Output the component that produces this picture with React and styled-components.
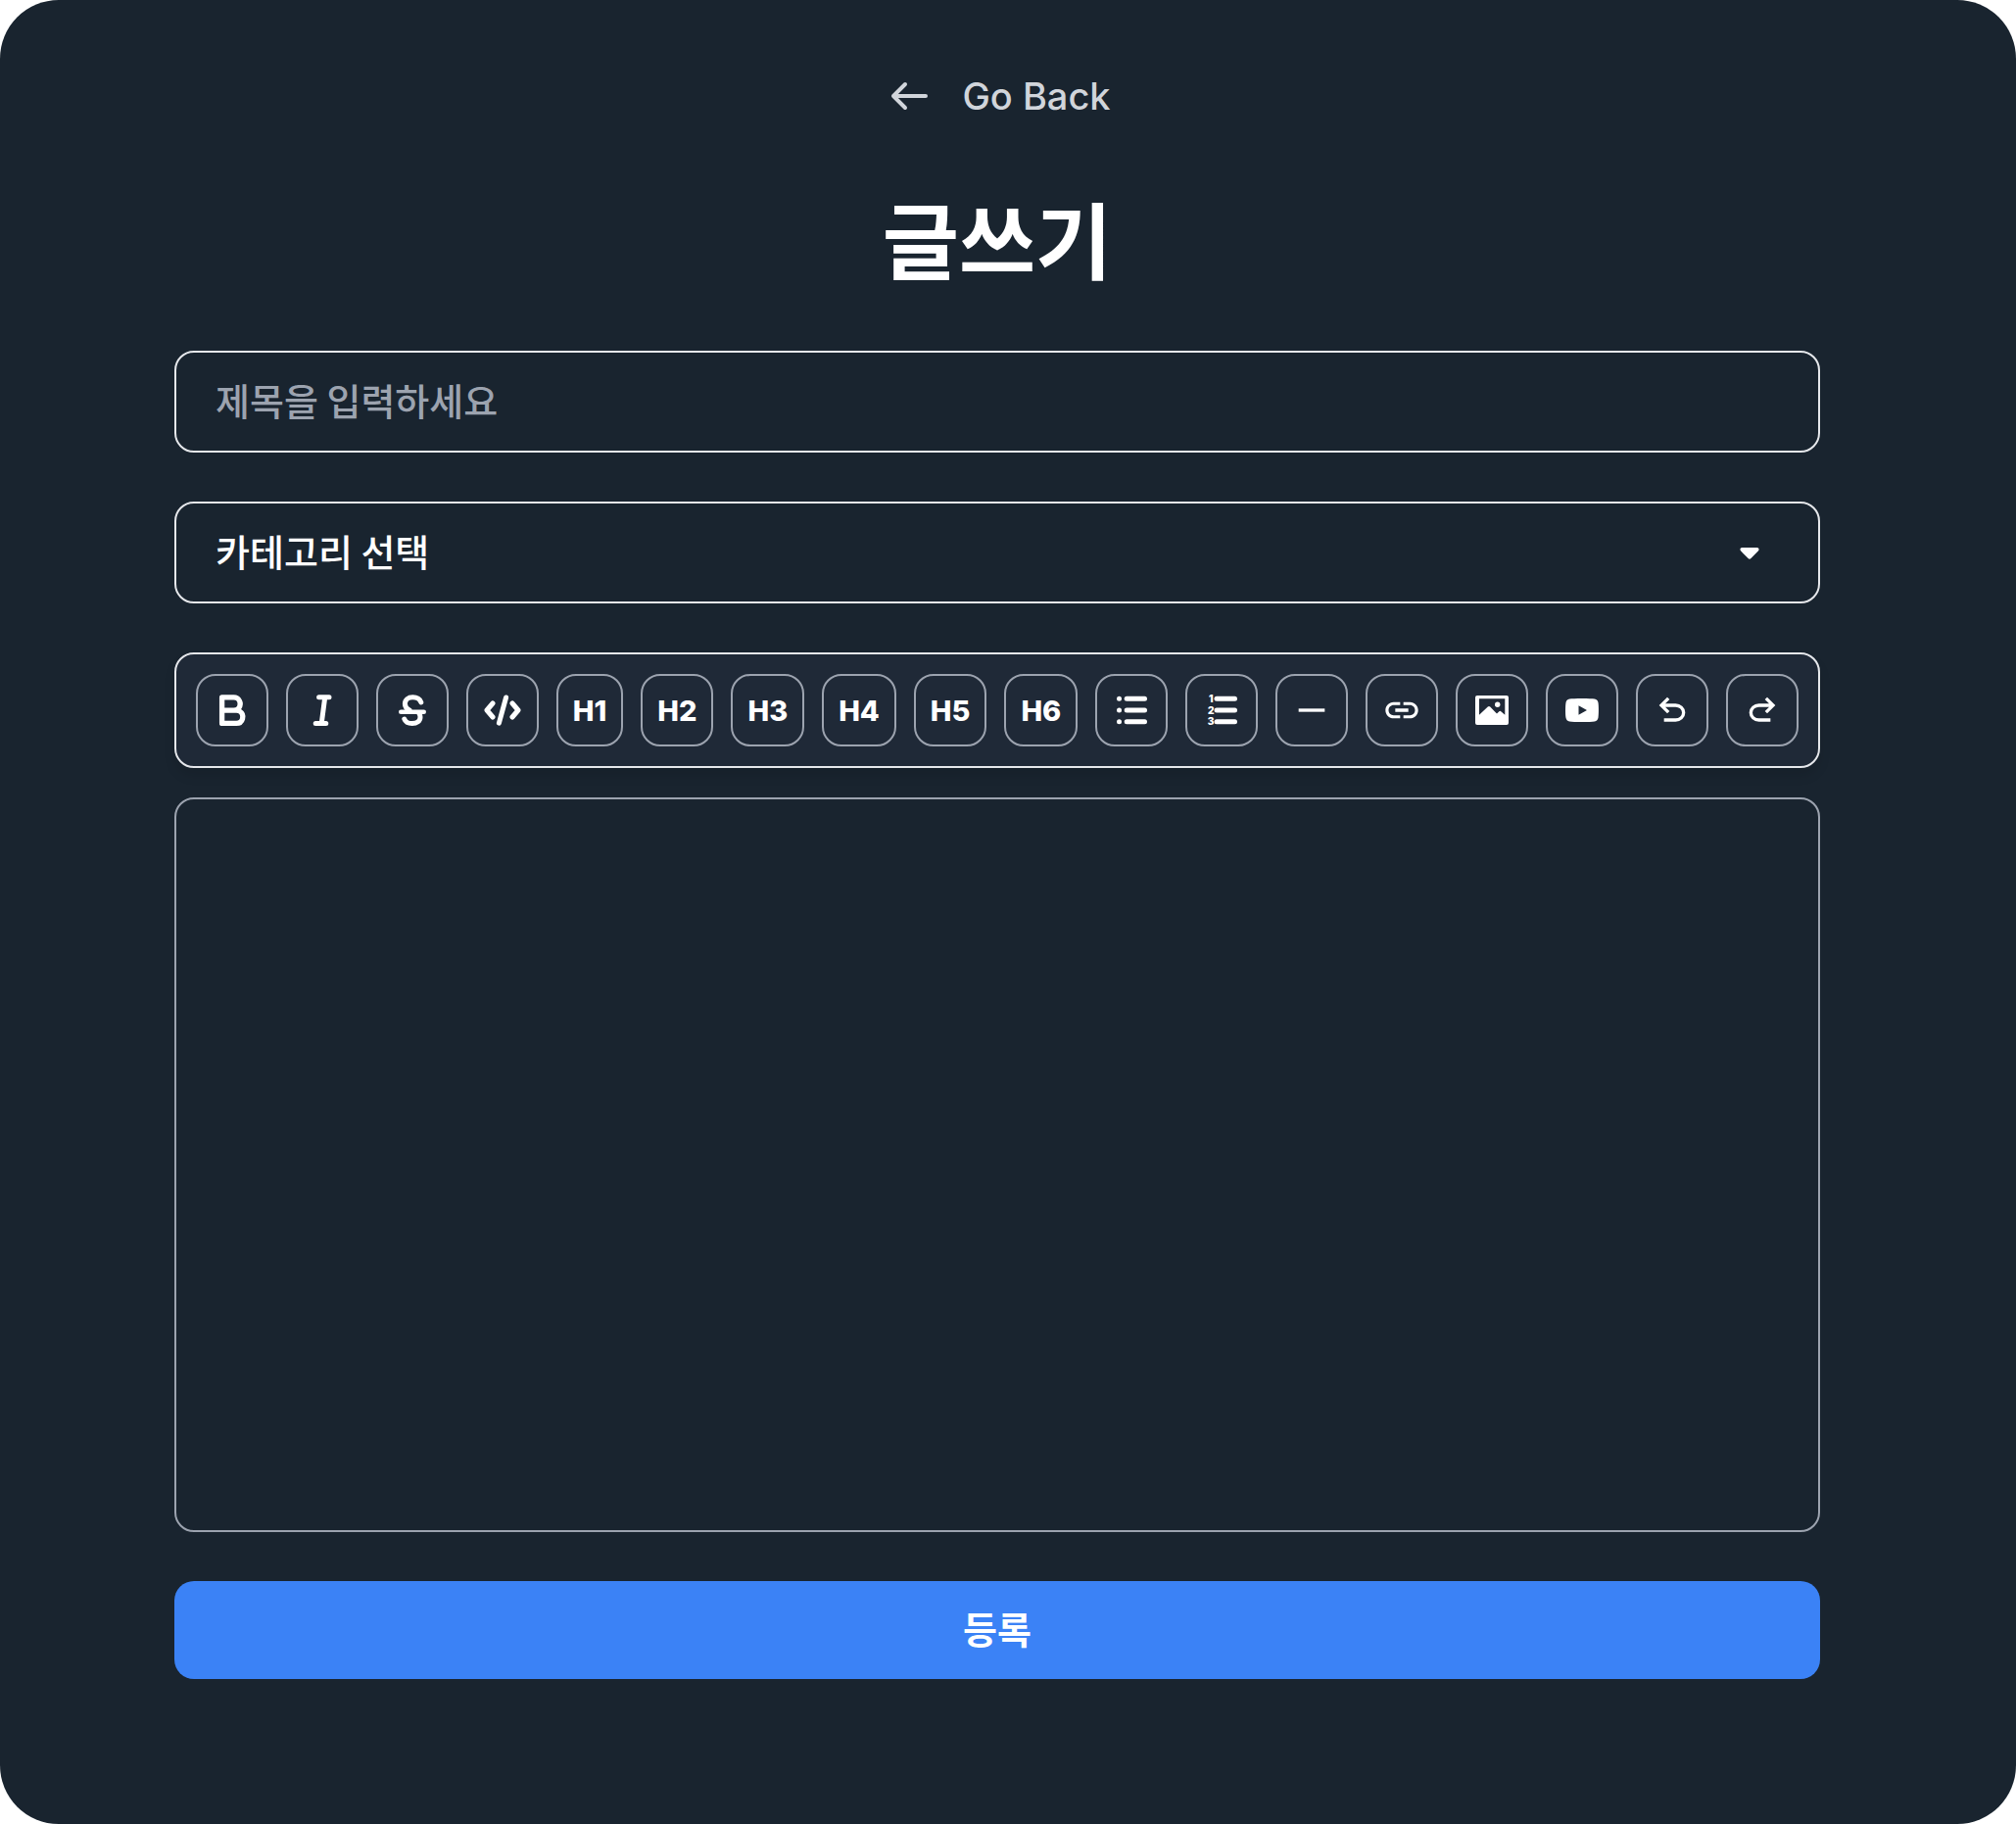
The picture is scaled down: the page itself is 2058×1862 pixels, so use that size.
import React from "react";
import styled, { createGlobalStyle } from "styled-components";
import { MdHorizontalRule, MdLink } from "react-icons/md";

const colors = {
  page: "#19242f",
  toolbar: "#1f2937",
  line: "#e5e7eb",
  lineMuted: "#9ca3af",
  back: "#d1d5db",
  primary: "#3b82f6",
};

const GlobalStyle = createGlobalStyle`
  * {
    box-sizing: border-box;
  }
  body {
    margin: 0;
    background: #ffffff;
    font-family: "Noto Sans CJK KR", sans-serif;
  }
  button, input, select, textarea {
    font-family: inherit;
  }
`;

const Page = styled.main`
  min-height: 100vh;
  padding: 68px 200px 148px 178px;
  background: ${colors.page};
  border-radius: 60px;
  color: #ffffff;
`;

const BackLink = styled.a`
  display: flex;
  align-items: center;
  justify-content: center;
  gap: 32px;
  height: 60px;
  color: ${colors.back};
  font-family: Inter, sans-serif;
  font-size: 38px;
  font-weight: 500;
  line-height: 60px;
  text-decoration: none;
`;

const Title = styled.h1`
  margin: 54px 0 56px;
  font-size: 85px;
  font-weight: 700;
  line-height: 120px;
  text-align: center;
`;

const Form = styled.form`
  display: flex;
  flex-direction: column;
  gap: 50px;
`;

const TitleInput = styled.input`
  width: 100%;
  height: 104px;
  padding: 0 40px 6px;
  border: 2px solid ${colors.line};
  border-radius: 20px;
  background: transparent;
  color: #ffffff;
  font-size: 38px;
  font-weight: 500;

  &::placeholder {
    color: ${colors.lineMuted};
    opacity: 1;
  }
`;

const SelectWrap = styled.div`
  position: relative;
`;

const Select = styled.select`
  display: block;
  width: 100%;
  height: 104px;
  padding: 0 100px 6px 40px;
  border: 2px solid ${colors.line};
  border-radius: 20px;
  appearance: none;
  background: transparent;
  color: #ffffff;
  font-size: 38px;
  font-weight: 500;
`;

const Caret = styled.svg`
  position: absolute;
  top: 46px;
  right: 61px;
  pointer-events: none;
`;

const Editor = styled.div`
  display: flex;
  flex-direction: column;
  gap: 30px;
`;

const Toolbar = styled.div`
  display: flex;
  justify-content: space-between;
  padding: 20px;
  border: 2px solid ${colors.line};
  border-radius: 20px;
  background: ${colors.toolbar};
  box-shadow: 0 8px 12px rgba(0, 0, 0, 0.1);
`;

const ToolButton = styled.button`
  display: flex;
  align-items: center;
  justify-content: center;
  height: 74px;
  padding: 0 15px;
  border: 2px solid ${colors.lineMuted};
  border-radius: 20px;
  background: transparent;
  color: #ffffff;
  font-family: Inter, sans-serif;
  font-size: 29px;
  font-weight: 800;
  cursor: pointer;
`;

const Content = styled.textarea`
  display: block;
  width: 100%;
  height: 750px;
  padding: 40px;
  border: 2px solid ${colors.lineMuted};
  border-radius: 20px;
  background: transparent;
  color: #ffffff;
  font-size: 38px;
  resize: none;
`;

const SubmitButton = styled.button`
  height: 100px;
  padding: 0 0 6px;
  border: 0;
  border-radius: 20px;
  background: ${colors.primary};
  color: #ffffff;
  font-size: 38px;
  font-weight: 700;
  cursor: pointer;
`;

const Icon = ({ children }) => (
  <svg width="40" height="40" viewBox="0 0 40 40" fill="currentColor" aria-hidden="true">
    {children}
  </svg>
);

const StrokeIcon = ({ children }) => (
  <Icon>
    <g fill="none" stroke="currentColor" strokeWidth="5" strokeLinecap="round" strokeLinejoin="round">
      {children}
    </g>
  </Icon>
);

const BoldIcon = () => (
  <Icon>
    <path
      transform="translate(-1 -1) scale(2.65)"
      d="M4 2h4.5a3.501 3.501 0 0 1 2.852 5.53A3.499 3.499 0 0 1 9.5 14H4a1 1 0 0 1-1-1V3a1 1 0 0 1 1-1Zm1 7v3h4.5a1.5 1.5 0 0 0 0-3Zm3.5-2a1.5 1.5 0 0 0 0-3H5v3Z"
    />
  </Icon>
);

const ItalicIcon = () => (
  <StrokeIcon>
    <path d="M16.6 6.8H27M13.2 33.5H23.8M22.7 7L19.3 33" />
  </StrokeIcon>
);

const StrikeIcon = () => (
  <StrokeIcon>
    <path d="M8.3 21.7H31.7" strokeWidth="4.6" />
    <path d="M28.8 11.8C27.5 8.5 24.4 6.8 20.4 6.8C15.6 6.8 12.4 9.4 12.4 13.6C12.4 16.8 14 18.6 17 20" />
    <path d="M11.8 29C12.8 31.8 15.8 33.6 19.8 33.6C24.6 33.6 28 31.2 28 27C28 25.4 27.6 24.2 26.8 23" />
  </StrokeIcon>
);

const CodeIcon = () => (
  <StrokeIcon>
    <path d="M10 13L4 20L10 27M30 13L36 20L30 27M23.6 7L16.4 33.2" />
  </StrokeIcon>
);

const BulletListIcon = () => (
  <Icon>
    {[8.3, 20, 31.7].map((y) => (
      <g key={y}>
        <circle cx="7.5" cy={y} r="2.5" />
        <rect x="12.7" y={y - 2.5} width="23.3" height="5" rx="2.5" />
      </g>
    ))}
  </Icon>
);

const NumberListIcon = () => (
  <Icon>
    {[8.3, 20, 31.7].map((y, i) => (
      <g key={y}>
        <text x="9.2" y={y + 3.7} textAnchor="middle" fontSize="10" fontWeight="900">
          {i + 1}
        </text>
        <rect x="12.5" y={y - 2.5} width="23.5" height="5" rx="2.5" />
      </g>
    ))}
  </Icon>
);

const ImageIcon = () => (
  <Icon>
    <path
      fillRule="evenodd"
      d="M5 5H35A2 2 0 0 1 37 7V33A2 2 0 0 1 35 35H5A2 2 0 0 1 3 33V7A2 2 0 0 1 5 5ZM7 8.3V24.8L15.8 16.6Q17 15.6 18.2 16.6L25 23.4L27.4 21.2Q28.3 20.4 29.2 21.2L33.3 24.8V8.3Z"
    />
    <circle cx="25.7" cy="14.3" r="2.7" />
  </Icon>
);

const VideoIcon = () => (
  <Icon>
    <path
      fillRule="evenodd"
      d="M20 8C26 8 30.5 8.2 32.8 8.6C35 9 36.1 10.2 36.5 12.2C37.1 15.5 37.1 24.5 36.5 27.8C36.1 29.8 35 31 32.8 31.4C30.5 31.8 26 32 20 32C14 32 9.5 31.8 7.2 31.4C5 31 3.9 29.8 3.5 27.8C2.9 24.5 2.9 15.5 3.5 12.2C3.9 10.2 5 9 7.2 8.6C9.5 8.2 14 8 20 8ZM16.5 15.2V24.8L25 20Z"
    />
  </Icon>
);

const undoPath =
  "M7 19v-2h7.1q1.575 0 2.738-1T18 13.5T16.838 11T14.1 10H7.8l2.6 2.6L9 14L4 9l5-5l1.4 1.4L7.8 8h6.3q2.425 0 4.163 1.575T20 13.5t-1.737 3.925T14.1 19z";

const UndoIcon = () => (
  <svg width="40" height="40" viewBox="0 0 24 24" fill="currentColor" aria-hidden="true">
    <path d={undoPath} />
  </svg>
);

const RedoIcon = () => (
  <svg width="40" height="40" viewBox="0 0 24 24" fill="currentColor" aria-hidden="true">
    <path transform="translate(24 0) scale(-1 1)" d={undoPath} />
  </svg>
);

const ArrowIcon = () => (
  <svg width="48" height="40" viewBox="0 0 48 40" fill="none" aria-hidden="true">
    <path
      d="M43 20H10M22 8L10 20L22 32"
      stroke="currentColor"
      strokeWidth="4"
      strokeLinecap="round"
      strokeLinejoin="round"
    />
  </svg>
);

const tools = [
  { label: "Bold", icon: <BoldIcon /> },
  { label: "Italic", icon: <ItalicIcon /> },
  { label: "Strike", icon: <StrikeIcon /> },
  { label: "Code", icon: <CodeIcon /> },
  { label: "H1" },
  { label: "H2" },
  { label: "H3" },
  { label: "H4" },
  { label: "H5" },
  { label: "H6" },
  { label: "Bullet list", icon: <BulletListIcon /> },
  { label: "Ordered list", icon: <NumberListIcon /> },
  { label: "Horizontal rule", icon: <MdHorizontalRule size={40} /> },
  { label: "Link", icon: <MdLink size={40} /> },
  { label: "Image", icon: <ImageIcon /> },
  { label: "Youtube", icon: <VideoIcon /> },
  { label: "Undo", icon: <UndoIcon /> },
  { label: "Redo", icon: <RedoIcon /> },
];

const App = () => {
  return (
    <>
      <GlobalStyle />
      <Page>
        <BackLink href="#back">
          <ArrowIcon />
          Go Back
        </BackLink>
        <Title>글쓰기</Title>
        <Form onSubmit={(e) => e.preventDefault()}>
          <TitleInput type="text" aria-label="제목" placeholder="제목을 입력하세요" />
          <SelectWrap>
            <Select aria-label="카테고리" defaultValue="">
              <option value="">카테고리 선택</option>
            </Select>
            <Caret width="22" height="14" viewBox="0 0 22 14" aria-hidden="true">
              <path
                d="M3.4 1H18.6C20.6 1 21.2 3.2 19.8 4.6L12.4 12Q11 13.4 9.6 12L2.2 4.6C.8 3.2 1.4 1 3.4 1Z"
                fill="#ffffff"
              />
            </Caret>
          </SelectWrap>
          <Editor>
            {/* Formatting buttons, headings use their label as the face */}
            <Toolbar role="toolbar">
              {tools.map((tool) => (
                <ToolButton key={tool.label} type="button" aria-label={tool.label}>
                  {tool.icon || tool.label}
                </ToolButton>
              ))}
            </Toolbar>
            <Content aria-label="내용" />
          </Editor>
          <SubmitButton type="submit">등록</SubmitButton>
        </Form>
      </Page>
    </>
  );
};

export default App;
